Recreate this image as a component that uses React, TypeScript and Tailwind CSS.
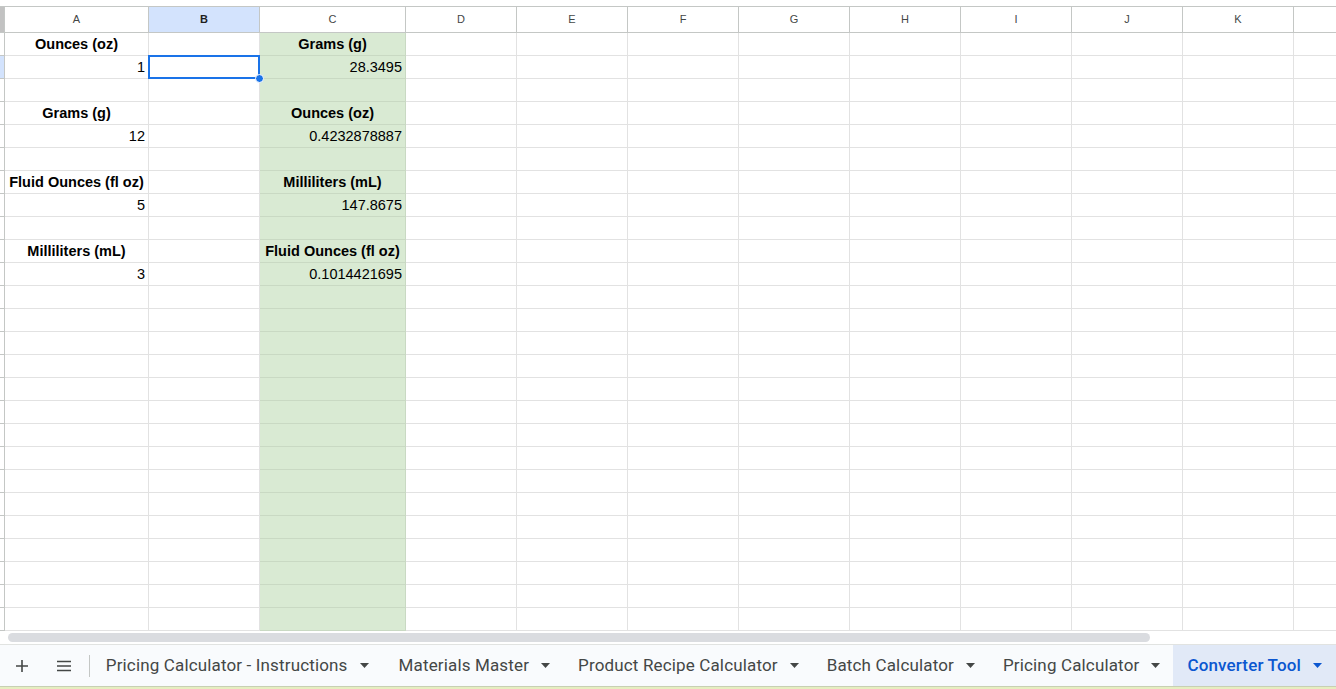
import React from "react";

const cols = [
  { k: "A", w: 144 },
  { k: "B", w: 111 },
  { k: "C", w: 146 },
  { k: "D", w: 111 },
  { k: "E", w: 111 },
  { k: "F", w: 111 },
  { k: "G", w: 111 },
  { k: "H", w: 111 },
  { k: "I", w: 111 },
  { k: "J", w: 111 },
  { k: "K", w: 111 },
  { k: "L", w: 60 },
];

type Cell = { t: string; bold?: boolean };
const data: Record<number, { a?: Cell; c?: Cell }> = {
  0: { a: { t: "Ounces (oz)", bold: true }, c: { t: "Grams (g)", bold: true } },
  1: { a: { t: "1" }, c: { t: "28.3495" } },
  3: { a: { t: "Grams (g)", bold: true }, c: { t: "Ounces (oz)", bold: true } },
  4: { a: { t: "12" }, c: { t: "0.4232878887" } },
  6: { a: { t: "Fluid Ounces (fl oz)", bold: true }, c: { t: "Milliliters (mL)", bold: true } },
  7: { a: { t: "5" }, c: { t: "147.8675" } },
  9: { a: { t: "Milliliters (mL)", bold: true }, c: { t: "Fluid Ounces (fl oz)", bold: true } },
  10: { a: { t: "3" }, c: { t: "0.1014421695" } },
};

const tabs = [
  { t: "Pricing Calculator - Instructions", pl: "pl-[16px]", pr: "pr-[14px]" },
  { t: "Materials Master", pl: "pl-[16px]", pr: "pr-[14px]" },
  { t: "Product Recipe Calculator", pl: "pl-[14px]", pr: "pr-[14px]" },
  { t: "Batch Calculator", pl: "pl-[14px]", pr: "pr-[14px]" },
  { t: "Pricing Calculator", pl: "pl-[14px]", pr: "pr-[13px]" },
];

function Caret({ active }: { active?: boolean }) {
  return (
    <svg width="9" height="5" viewBox="0 0 9 5" className="shrink-0">
      <path d="M0 0 L9 0 L4.5 5 Z" fill={active ? "#0b57d0" : "#444746"} />
    </svg>
  );
}

function CellView({ cell }: { cell?: Cell }) {
  if (!cell) return null;
  return (
    <span
      className={
        "w-full px-[3px] text-[14.5px] leading-none text-black whitespace-nowrap " +
        (cell.bold ? "font-bold text-center" : "text-right")
      }
    >
      {cell.t}
    </span>
  );
}

export default function App() {
  const rows = Array.from({ length: 26 }, (_, i) => i);
  return (
    <div
      className="w-[1336px] h-[689px] overflow-hidden bg-white flex flex-col"
      style={{ fontFamily: '"Liberation Sans", Arial, sans-serif' }}
    >
      <div className="h-[6px] shrink-0 bg-white" />
      {/* column header */}
      <div className="flex h-[27px] shrink-0 border-t border-b border-[#c4c7c5]">
        <div className="w-[5px] shrink-0 bg-[#c2c2c2] border-r border-[#c4c7c5]" />
        {cols.map((c) => (
          <div
            key={c.k}
            style={{ width: c.w }}
            className={
              "shrink-0 flex items-center justify-center border-r border-[#c4c7c5] text-[11px] " +
              (c.k === "B" ? "bg-[#d3e3fd] text-[#1f1f1f] font-semibold" : "text-[#444746]")
            }
          >
            {c.k === "L" ? "" : c.k}
          </div>
        ))}
      </div>
      {/* grid */}
      <div className="flex flex-col shrink-0">
        {rows.map((r) => (
          <div key={r} className="flex h-[23px] shrink-0">
            <div
              className={
                "w-[5px] shrink-0 border-r border-b border-[#c4c7c5] " +
                (r === 1 ? "bg-[#d3e3fd]" : "bg-white")
              }
            />
            {cols.map((c) => {
              const d = data[r];
              const isC = c.k === "C";
              const cell = c.k === "A" ? d?.a : isC ? d?.c : undefined;
              const selected = c.k === "B" && r === 1;
              return (
                <div
                  key={c.k}
                  style={{ width: c.w }}
                  className={
                    "relative shrink-0 flex items-center pt-[1px] border-r border-b " +
                    (isC ? "bg-[#d9ead3] border-[#c9d9c3]" : "border-[#e2e2e2]")
                  }
                >
                  <CellView cell={cell} />
                  {selected && (
                    <>
                      <div className="absolute left-[-1px] top-[-1px] right-[-1px] bottom-[-1px] border-2 border-[#1a73e8]" />
                      <div className="absolute right-[-5px] bottom-[-5px] w-[9px] h-[9px] rounded-full bg-[#1a73e8] border border-white z-10" />
                    </>
                  )}
                </div>
              );
            })}
          </div>
        ))}
      </div>
      {/* scrollbar */}
      <div className="h-[14px] shrink-0 bg-white flex items-center border-b border-[#e1e3e1]">
        <div className="ml-[8px] w-[1142px] h-[9px] rounded-full bg-[#dadce0]" />
      </div>
      {/* tabs */}
      <div
        className="h-[41px] shrink-0 bg-[#f9fbfd] flex items-center"
        style={{ fontFamily: 'Roboto, "Open Sans", sans-serif' }}
      >
        <div className="w-[44px] flex justify-center pl-[2px]">
          <svg width="14" height="14" viewBox="0 0 14 14">
            <path d="M7 1 V13 M1 7 H13" stroke="#444746" strokeWidth="1.6" />
          </svg>
        </div>
        <div className="w-[44px] flex justify-center">
          <svg width="16" height="12" viewBox="0 0 16 12">
            <path d="M1 1.5 H15 M1 6 H15 M1 10.5 H15" stroke="#444746" strokeWidth="1.6" />
          </svg>
        </div>
        <div className="w-px h-[22px] bg-[#c4c7c5] ml-[4px]" />
        <div className="flex items-stretch h-full">
          {tabs.map((t) => (
            <div key={t.t} className={"flex items-center gap-[12px] h-full " + t.pl + " " + t.pr}>
              <span className="text-[17px] font-normal text-[#444746] whitespace-nowrap tracking-[0.15px]">
                {t.t}
              </span>
              <Caret />
            </div>
          ))}
          <div className="flex items-center gap-[12px] pl-[14px] pr-[14px] h-full bg-[#e1e9f7]">
            <span className="text-[17px] font-medium text-[#0b57d0] whitespace-nowrap tracking-[0.15px]">
              Converter Tool
            </span>
            <Caret active />
          </div>
        </div>
      </div>
      <div className="h-[3px] shrink-0 border-t border-[#c8cfb4] bg-[#e6eec0]" />
    </div>
  );
}
